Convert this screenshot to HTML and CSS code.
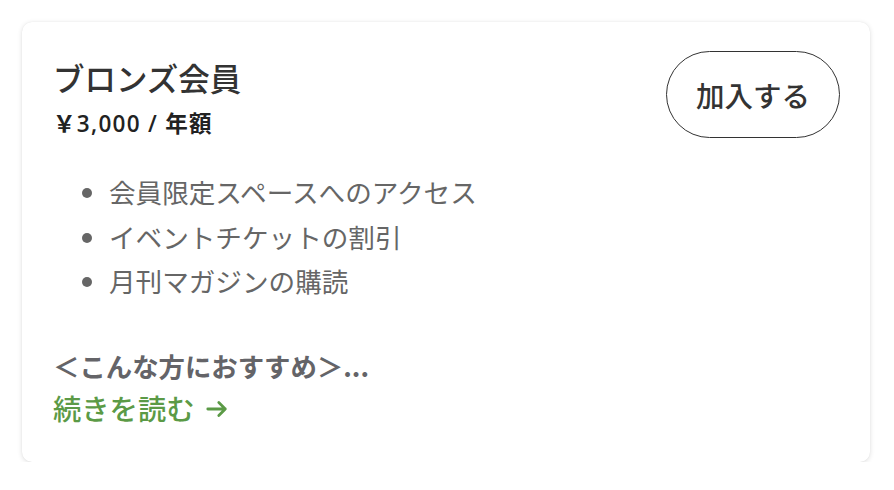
FILE: index.html
```html
<!DOCTYPE html>
<html lang="ja">
<head>
<meta charset="utf-8">
<link rel="stylesheet" href="styles.css">
</head>
<body>
<div class="card">
  <div class="head">
    <div class="info">
      <h2 class="title">ブロンズ会員</h2>
      <div class="price">￥3,000 / 年額</div>
    </div>
    <button class="join">加入する</button>
  </div>
  <ul class="perks">
    <li>会員限定スペースへのアクセス</li>
    <li>イベントチケットの割引</li>
    <li>月刊マガジンの購読</li>
  </ul>
  <div class="recommend">＜こんな方におすすめ＞...</div>
  <a class="more" href="#">続きを読む<svg class="arrow" viewBox="0 0 22 18" width="22" height="18" aria-hidden="true"><path d="M1.8 9h17.5M12.8 2.6l6.5 6.4-6.5 6.4" fill="none" stroke="currentColor" stroke-width="2.8" stroke-linecap="round" stroke-linejoin="round"/></svg></a>
</div>
</body>
</html>
```
FILE: styles.css
```css
* { box-sizing: border-box; }
html, body { background: #ffffff; }
body {
  margin: 0;
  padding: 22px 24px 0 22px;
  font-family: "Noto Sans CJK JP", "Noto Sans", sans-serif;
  color: #333;
}
.card {
  background: #fff;
  border-radius: 10px;
  box-shadow: 0 1px 5px rgba(0,0,0,0.13), 0 0 1px rgba(0,0,0,0.08);
  height: 440px;
  padding: 29px 30px 0 31px;
}
.head {
  display: flex;
  justify-content: space-between;
  align-items: flex-start;
}
.title {
  margin: 5px 0 0;
  font-size: 31.5px;
  font-weight: 500;
  line-height: 42px;
  color: #333;
}
.price {
  margin-top: 11px;
  font-family: "Open Sans", "Noto Sans CJK JP", sans-serif;
  font-size: 22.5px;
  font-weight: 600;
  letter-spacing: 1.3px;
  line-height: 30px;
  color: #222;
}
.join {
  font-family: inherit;
  background: #fff;
  border: 1px solid #333;
  border-radius: 44px;
  height: 87px;
  width: 174px;
  font-size: 28.5px;
  font-weight: 500;
  color: #333;
  padding: 0;
  cursor: pointer;
}
.perks {
  margin: 31px 0 0;
  padding-left: 56px;
  color: #666;
  font-size: 26.6px;
  line-height: 44.5px;
}
.perks li::marker { color: #666; }
.recommend {
  margin-top: 42px;
  font-size: 26.4px;
  font-weight: 700;
  color: #646468;
  line-height: 40px;
}
.more {
  display: inline-flex;
  align-items: center;
  gap: 11px;
  margin-top: 2px;
  font-size: 28.3px;
  font-weight: 500;
  line-height: 40px;
  color: #5b9a46;
  text-decoration: none;
}
.arrow { display: block; margin-top: 2px; }
```
